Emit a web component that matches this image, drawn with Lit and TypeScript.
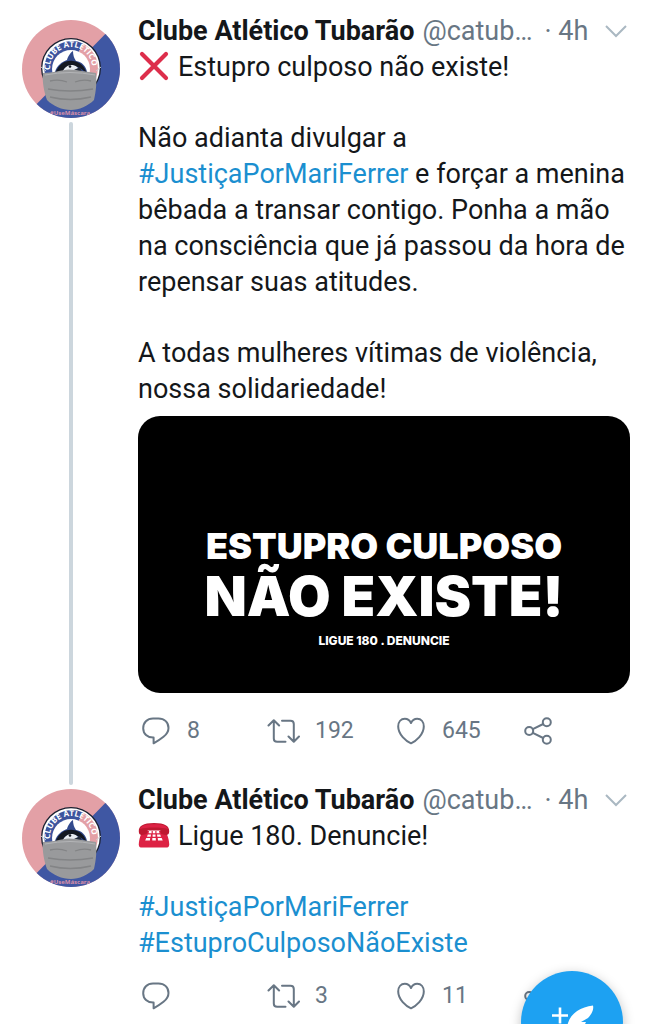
import { LitElement, html, svg, css, nothing } from "lit";
import { customElement, property } from "lit/decorators.js";

const crossEmoji = html`<svg class="emoji" viewBox="0 0 32 32" role="img" aria-label="❌">
  <path d="M4 4L28 28M28 4L4 28" stroke="#dd2e4b" stroke-width="4.2" stroke-linecap="round" fill="none" />
</svg>`;

const phoneEmoji = html`<svg class="emoji" viewBox="0 0 32 32" role="img" aria-label="☎️">
  <path d="M5 12C3 14 .8 21 .8 25.500C.8 28 2 28.500 4 28.500H28C30 28.500 31.200 28 31.200 25.500C31.200 21 29 14 27 12Z" fill="#dd2244" />
  <path d="M.8 12C.8 7 5 4 16 4S31.200 7 31.200 12C31.200 16 29 16.200 26.500 15.800C23 15.400 22.500 14 22.300 11.500H9.700C9.500 14 9 15.400 5.500 15.800C3 16.200 .8 16 .8 12Z" fill="#be1931" />
  <path d="M2 10C3 6.500 8 5.200 16 5.200S29 6.500 30 10C24 8 8 8 2 10Z" fill="#dd2244" />
  <g fill="#fff">
    <path d="M11 12h2.600v2.200H10.600zM14.800 12h2.500v2.200H14.800zM18.500 12H21l.5 2.200H18.500z" />
    <path d="M9.800 15.500h3.200l-.3 2.300H9zM14.600 15.500h2.900v2.300H14.600zM19 15.500h3.200l.8 2.300H19.300z" />
    <path d="M8.200 19h4l-.3 2.400H7.200zM14.300 19h3.500v2.400H14.300zM19.700 19h4l1 2.400H20z" />
  </g>
</svg>`;

const icons = {
  reply: html`<svg class="icon" width="28" height="28" viewBox="0 0 28 28" aria-hidden="true">
    <path d="M11 1.500H16.500C22.500 1.500 26.500 5.400 26.500 11C26.500 14.400 25 17 21.500 19.800C18.500 22.200 15 24.500 11.600 26.300V20.600C5.200 20.800 1.200 16.700 1.200 11.200C1.200 5.600 5.200 1.500 11 1.500Z" />
  </svg>`,
  retweet: html`<svg class="icon" width="33" height="28" viewBox="0 0 33 28" aria-hidden="true">
    <path d="M1.500 8.500L6.800 3.200L12.100 8.500M6.800 3.500V21.500Q6.800 24.800 10.100 24.800H18.500M15 3.800H23.500Q26.800 3.800 26.800 7.100V24.500M21.500 19.500L26.800 24.800L32 19.500" />
  </svg>`,
  like: html`<svg class="icon" width="28" height="28" viewBox="0 0 28 28" aria-hidden="true">
    <path d="M14 26.300C9 24 1.200 17.500 1.200 9.500C1.200 4.800 4 1.700 7.800 1.700C10.600 1.700 12.800 3.300 14 6C15.200 3.300 17.400 1.700 20.200 1.700C24 1.700 26.800 4.800 26.800 9.500C26.800 17.500 19 24 14 26.300Z" />
  </svg>`,
  share: html`<svg class="icon" width="28" height="28" viewBox="0 0 28 28" aria-hidden="true">
    <circle cx="5.200" cy="14" r="4" /><circle cx="22.800" cy="5.200" r="4" /><circle cx="22.800" cy="22.800" r="4" />
    <path d="M8.800 12.200L19.200 7M8.800 15.800L19.200 21" />
  </svg>`,
};

@customElement("club-avatar")
export class ClubAvatar extends LitElement {
  static styles = css`
    :host { display: block; width: 98px; height: 98px; }
    .picture { display: block; width: 100%; height: 100%; }
    .ring { font: 700 8px "Open Sans", sans-serif; }
    .slogan { font: 700 6px "Open Sans", sans-serif; }
  `;

  render() {
    return html`<svg class="picture" viewBox="0 0 98 98" role="img" aria-label="Clube Atlético Tubarão">
      <defs>
        <clipPath id="disc"><circle cx="49" cy="49" r="49" /></clipPath>
        <path id="arc" d="M28 53V48A21 21 0 0 1 70 48V55" />
      </defs>
      <g clip-path="url(#disc)">
        <rect width="98" height="98" fill="#e3a0a6" />
        <path d="M98 -1L0 99H98Z" fill="#3f57a3" />
        <circle cx="49" cy="48" r="30" fill="#1a2030" />
        <circle cx="49" cy="48" r="28.700" fill="#fff" />
        <path d="M49 48L24 58A27.500 27.500 0 0 1 61 23.500Z" fill="#3c549e" />
        <path d="M49 48L61 23.500A27.500 27.500 0 0 1 74 58Z" fill="#e3a0a6" />
        <circle cx="49" cy="49" r="19" fill="#fff" />
        <path d="M33 52C35 45 40 42 45 40C46 36 49 32 51 31C51 35 52 38 54 41C60 42 64 46 65 52Z" fill="#334a8d" />
        <path d="M33 54C37 43 44 40 51 41C59 42 63 47 65 54C58 46 49 44 43 48L39 54Z" fill="#141923" />
        <path d="M40 53C43 45 50 43 55 47L62 54Z" fill="#e9edf2" />
        <circle cx="48" cy="46.500" r="1.300" fill="#141923" />
        <path d="M52 50L58 47L60 52Z" fill="#202838" />
        <text class="ring" fill="#fff"><textPath href="#arc" startOffset="3">CLUBE ATLÉTICO</textPath></text>
        <path d="M19 47L24 51M79 47L74 51" stroke="#c9cbd0" stroke-width="1" />
        <path d="M21 53C30 53 40 50 47 49.500C55 50 65 52 74 53C75 61 74 72 72 80C66 86 57 90 49 90C40 90 31 86 25 80C22 72 20 61 21 53Z" fill="#999a9c" />
        <path d="M28 61Q37 59 45 62M53 62Q61 59 69 61M26 69Q48 73 71 69M28 77Q48 82 69 77" fill="none" stroke="#838486" stroke-width="1.300" />
        <path d="M23 55Q48 50 73 55" fill="none" stroke="#b4b5b7" />
        <text class="slogan" x="48" y="95" text-anchor="middle" fill="#d98fa8">#UseMáscara</text>
      </g>
    </svg>`;
  }
}

@customElement("tweet-item")
export class TweetItem extends LitElement {
  @property({ type: Boolean }) threaded = false;
  @property() replies = "";
  @property() retweets = "";
  @property() likes = "";

  static styles = css`
    :host { display: block; }
    .tweet { display: grid; grid-template-columns: 98px minmax(0, 1fr); column-gap: 18px; padding: 0 22px; }
    .rail { display: flex; flex-direction: column; align-items: center; padding-top: 7px; gap: 4px; }
    .thread { flex: 1; width: 4px; border-radius: 2px; background: #ccd6dd; margin-bottom: -36px; }
    .head { display: flex; align-items: center; height: 36px; line-height: 36px; white-space: nowrap; }
    .name { font-weight: 700; color: #14171a; text-decoration: none; }
    .handle { color: #687684; margin-left: 8px; }
    .time { color: #687684; margin-left: 12px; }
    .more { margin-left: auto; padding: 0; border: 0; background: none; display: flex; }
    .chevron { fill: none; stroke: #aab8c2; stroke-width: 2; }
    .actions { display: grid; grid-template-columns: 125fr 130fr 127fr 106fr; padding-left: 4px; height: 36px; margin-top: 17px; }
    .action { display: flex; align-items: center; gap: 17px; padding: 0; border: 0; background: none; color: #687684; font: inherit; font-size: 23px; text-align: left; }
    .tight { gap: 15px; }
    .icon { flex: none; fill: none; stroke: currentColor; stroke-width: 2; stroke-linejoin: round; stroke-linecap: round; }
  `;

  private action(label: string, icon: unknown, count = "", extra = "") {
    return html`<button class="action ${extra}" type="button" aria-label=${label}>
      ${icon}${count ? html`<span>${count}</span>` : nothing}
    </button>`;
  }

  render() {
    return html`<article class="tweet">
      <div class="rail">
        <club-avatar></club-avatar>
        ${this.threaded ? html`<div class="thread"></div>` : nothing}
      </div>
      <div>
        <header class="head">
          <a class="name" href="#perfil">Clube Atlético Tubarão</a>
          <span class="handle">@catub…</span>
          <span class="time">· 4h</span>
          <button class="more" type="button" aria-label="Mais opções">
            <svg class="chevron" width="26" height="16" viewBox="0 0 26 16"><path d="M2 3L12 13L22 3" /></svg>
          </button>
        </header>
        <slot></slot>
        <footer class="actions">
          ${this.action("Responder", icons.reply, this.replies)}
          ${this.action("Retweetar", icons.retweet, this.retweets, "tight")}
          ${this.action("Curtir", icons.like, this.likes)}
          ${this.action("Compartilhar", icons.share)}
        </footer>
      </div>
    </article>`;
  }
}

@customElement("app-root")
export class AppRoot extends LitElement {
  static styles = css`
    :host {
      display: block;
      box-sizing: border-box;
      height: 100vh;
      overflow: hidden;
      padding-top: 13px;
      background: #fff;
      font: 27px/36px Roboto, sans-serif;
      color: #14171a;
    }
    .item + .item { margin-top: 33px; }
    .text { display: flex; flex-direction: column; gap: 35px; }
    .paragraph { margin: 0; }
    .link { color: #1b8fd0; text-decoration: none; }
    .emoji { width: 32px; height: 32px; margin-right: 8px; vertical-align: -6px; }
    .card {
      display: flex; flex-direction: column; align-items: center; justify-content: center;
      box-sizing: border-box; aspect-ratio: 492 / 277; margin: 9px 0 20px; padding-top: 64px;
      border-radius: 22px; background: #000; color: #fff;
      font-family: Inter, sans-serif; font-weight: 900; white-space: nowrap;
    }
    .line-one { font-size: 36px; line-height: 44px; }
    .line-two { font-size: 55px; line-height: 56px; }
    .line-three { font-size: 12px; font-weight: 800; line-height: 16px; margin-top: 9px; }
    .compose {
      position: fixed; right: 29px; bottom: -49px; width: 102px; height: 102px; padding: 0;
      border: 0; border-radius: 50%; background: #1da1f2; box-shadow: 0 3px 12px rgba(0, 0, 0, 0.25);
    }
    .feather { display: block; width: 102px; height: 102px; }
  `;

  render() {
    return html`
      <main>
        <tweet-item class="item" threaded replies="8" retweets="192" likes="645">
          <div class="text">
            <p class="paragraph">${crossEmoji}Estupro culposo não existe!</p>
            <p class="paragraph">
              Não adianta divulgar a <a class="link" href="#JusticaPorMariFerrer">#JustiçaPorMariFerrer</a> e forçar a menina
              bêbada a transar contigo. Ponha a mão na consciência que já passou da hora de repensar suas atitudes.
            </p>
            <p class="paragraph">A todas mulheres vítimas de violência, nossa solidariedade!</p>
          </div>
          <figure class="card">
            <span class="line-one">ESTUPRO CULPOSO</span>
            <span class="line-two">NÃO EXISTE!</span>
            <span class="line-three">LIGUE 180 . DENUNCIE</span>
          </figure>
        </tweet-item>
        <tweet-item class="item" retweets="3" likes="11">
          <div class="text">
            <p class="paragraph">${phoneEmoji}Ligue 180. Denuncie!</p>
            <p class="paragraph">
              <a class="link" href="#JusticaPorMariFerrer">#JustiçaPorMariFerrer</a>
              <a class="link" href="#EstuproCulposoNaoExiste">#EstuproCulposoNãoExiste</a>
            </p>
          </div>
        </tweet-item>
      </main>
      <button class="compose" type="button" aria-label="Novo tweet">
        <svg class="feather" viewBox="0 0 102 102" aria-hidden="true">
          ${svg`<path d="M31 44.500H47M39 36.500V52.500" stroke="#fff" stroke-width="2.600" fill="none" />
          <path d="M72 34.500C60 36 50 42 47 52C45 59 43 64 41 70H44L48 60C58 61 63 56 65 51H60L67 47C71 43 73 38 72 34.500Z" fill="#fff" />`}
        </svg>
      </button>
    `;
  }
}
